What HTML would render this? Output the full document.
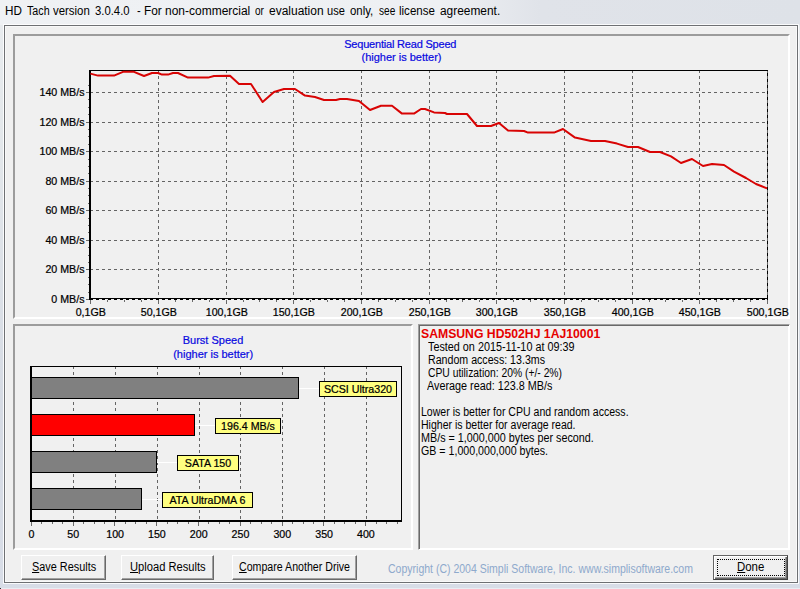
<!DOCTYPE html>
<html><head><meta charset="utf-8"><title>HD Tach</title>
<style>
html,body{margin:0;padding:0}
body{width:800px;height:589px;overflow:hidden;position:relative;font-family:"Liberation Sans",sans-serif;
 background:linear-gradient(180deg,#e9ecef 0px,#e4e8eb 120px,#d6dbe4 400px,#d8dde7 589px)}
.top{position:absolute;left:0;top:0;width:800px;height:25px;background:linear-gradient(90deg,#eff1f4 0,#eef0f3 440px,#e0e3e9 540px,#dee2e8 800px)}
.title{position:absolute;left:0;top:4px;font-size:12px;line-height:15px;color:#000;white-space:nowrap}
.title span{position:absolute;top:0;transform-origin:0 0;display:block}
.win{position:absolute;left:4px;top:25px;width:792px;height:556px;border:1px solid #6e7073;background:#f0f0f0;box-shadow:0 0 0 1px rgba(255,255,255,.85), inset 0 0 0 1px #f9f9f9}
.sunk{position:absolute;box-sizing:border-box;border:2px solid;border-color:#9c9c9c #fff #fff #9c9c9c}
.btn{position:absolute;box-sizing:border-box;height:25px;top:555px;border:1px solid;border-color:#fff #696969 #696969 #fff;box-shadow:inset -1px -1px 0 #a0a0a0;background:#f0f0f0;font-size:12px;line-height:15px;color:#000;white-space:nowrap}
svg{position:absolute;left:0;top:0}
.ax{font-family:"Liberation Sans",sans-serif;font-size:10.67px;fill:#000;stroke:#000;stroke-width:.22px}
.ti{font-family:"Liberation Sans",sans-serif;font-size:11px;fill:#0808e0;stroke:#0808e0;stroke-width:.2px}
.ms{position:absolute;font-size:12.5px;line-height:15px;white-space:nowrap;transform-origin:0 0;color:#000}
.ms.hd{font-weight:bold;color:#e60000;font-size:12px;line-height:13px}
.ms.cp{color:#8ea9cc;font-size:12px;line-height:13px}
.ms u{text-decoration:underline;text-underline-offset:1px;text-decoration-thickness:1px}
</style></head><body>
<div class="top"></div>
<div style="position:absolute;left:0;top:588px;width:800px;height:1px;background:#e9edf3"></div>
<div style="position:absolute;left:0;top:588px;width:1px;height:1px;background:#2a2c30"></div>
<div class="title"><span style="left:5.33px;transform:scaleX(0.975)">HD</span> <span style="left:26.6px;transform:scaleX(0.892)">Tach</span> <span style="left:53.1px;transform:scaleX(0.951)">version</span> <span style="left:94.66px;transform:scaleX(0.943)">3.0.4.0</span> <span style="left:136.9px;transform:scaleX(0.925)">-</span> <span style="left:144.41px;transform:scaleX(0.988)">For</span> <span style="left:165.1px;transform:scaleX(0.999)">non-commercial</span> <span style="left:255.4px;transform:scaleX(0.836)">or</span> <span style="left:269.4px;transform:scaleX(0.998)">evaluation</span> <span style="left:327.48px;transform:scaleX(0.922)">use</span> <span style="left:350.3px;transform:scaleX(0.952)">only,</span> <span style="left:379px;transform:scaleX(0.842)">see</span> <span style="left:399.24px;transform:scaleX(0.961)">license</span> <span style="left:439.5px;transform:scaleX(0.992)">agreement.</span></div>
<div class="win"></div>
<div class="sunk" style="left:13px;top:34px;width:777px;height:285px"></div>
<div class="sunk" style="left:13px;top:324px;width:400px;height:226px"></div>
<div class="sunk" style="left:418px;top:324px;width:372px;height:226px;border-width:1px;border-color:#a0a0a0 #fff #fff #a0a0a0;box-shadow:inset 1px 1px 0 #696969,inset -1px -1px 0 #fff"></div>
<svg width="800" height="589" viewBox="0 0 800 589" shape-rendering="crispEdges">
<line x1="158.5" y1="70" x2="158.5" y2="298" stroke="#646464" stroke-dasharray="3 3"/>
<line x1="226.5" y1="70" x2="226.5" y2="298" stroke="#646464" stroke-dasharray="3 3"/>
<line x1="293.5" y1="70" x2="293.5" y2="298" stroke="#646464" stroke-dasharray="3 3"/>
<line x1="361.5" y1="70" x2="361.5" y2="298" stroke="#646464" stroke-dasharray="3 3"/>
<line x1="429.5" y1="70" x2="429.5" y2="298" stroke="#646464" stroke-dasharray="3 3"/>
<line x1="496.5" y1="70" x2="496.5" y2="298" stroke="#646464" stroke-dasharray="3 3"/>
<line x1="564.5" y1="70" x2="564.5" y2="298" stroke="#646464" stroke-dasharray="3 3"/>
<line x1="632.5" y1="70" x2="632.5" y2="298" stroke="#646464" stroke-dasharray="3 3"/>
<line x1="699.5" y1="70" x2="699.5" y2="298" stroke="#646464" stroke-dasharray="3 3"/>
<line x1="90" y1="269.5" x2="767" y2="269.5" stroke="#646464" stroke-dasharray="3 3"/>
<line x1="90" y1="240.5" x2="767" y2="240.5" stroke="#646464" stroke-dasharray="3 3"/>
<line x1="90" y1="210.5" x2="767" y2="210.5" stroke="#646464" stroke-dasharray="3 3"/>
<line x1="90" y1="181.5" x2="767" y2="181.5" stroke="#646464" stroke-dasharray="3 3"/>
<line x1="90" y1="151.5" x2="767" y2="151.5" stroke="#646464" stroke-dasharray="3 3"/>
<line x1="90" y1="122.5" x2="767" y2="122.5" stroke="#646464" stroke-dasharray="3 3"/>
<line x1="90" y1="92.5" x2="767" y2="92.5" stroke="#646464" stroke-dasharray="3 3"/>
<rect x="86" y="299" width="3" height="1" fill="#6a6a6a"/>
<rect x="88" y="292" width="1" height="1" fill="#6a6a6a"/>
<rect x="88" y="284" width="1" height="1" fill="#6a6a6a"/>
<rect x="88" y="277" width="1" height="1" fill="#6a6a6a"/>
<rect x="86" y="269" width="3" height="1" fill="#6a6a6a"/>
<rect x="88" y="262" width="1" height="1" fill="#6a6a6a"/>
<rect x="88" y="255" width="1" height="1" fill="#6a6a6a"/>
<rect x="88" y="247" width="1" height="1" fill="#6a6a6a"/>
<rect x="86" y="240" width="3" height="1" fill="#6a6a6a"/>
<rect x="88" y="232" width="1" height="1" fill="#6a6a6a"/>
<rect x="88" y="225" width="1" height="1" fill="#6a6a6a"/>
<rect x="88" y="218" width="1" height="1" fill="#6a6a6a"/>
<rect x="86" y="210" width="3" height="1" fill="#6a6a6a"/>
<rect x="88" y="203" width="1" height="1" fill="#6a6a6a"/>
<rect x="88" y="195" width="1" height="1" fill="#6a6a6a"/>
<rect x="88" y="188" width="1" height="1" fill="#6a6a6a"/>
<rect x="86" y="181" width="3" height="1" fill="#6a6a6a"/>
<rect x="88" y="173" width="1" height="1" fill="#6a6a6a"/>
<rect x="88" y="166" width="1" height="1" fill="#6a6a6a"/>
<rect x="88" y="159" width="1" height="1" fill="#6a6a6a"/>
<rect x="86" y="151" width="3" height="1" fill="#6a6a6a"/>
<rect x="88" y="144" width="1" height="1" fill="#6a6a6a"/>
<rect x="88" y="136" width="1" height="1" fill="#6a6a6a"/>
<rect x="88" y="129" width="1" height="1" fill="#6a6a6a"/>
<rect x="86" y="122" width="3" height="1" fill="#6a6a6a"/>
<rect x="88" y="114" width="1" height="1" fill="#6a6a6a"/>
<rect x="88" y="107" width="1" height="1" fill="#6a6a6a"/>
<rect x="88" y="99" width="1" height="1" fill="#6a6a6a"/>
<rect x="86" y="92" width="3" height="1" fill="#6a6a6a"/>
<rect x="88" y="85" width="1" height="1" fill="#6a6a6a"/>
<rect x="90" y="300" width="1" height="4" fill="#6a6a6a"/>
<rect x="107" y="300" width="1" height="2" fill="#6a6a6a"/>
<rect x="124" y="300" width="1" height="2" fill="#6a6a6a"/>
<rect x="141" y="300" width="1" height="2" fill="#6a6a6a"/>
<rect x="158" y="300" width="1" height="4" fill="#6a6a6a"/>
<rect x="175" y="300" width="1" height="2" fill="#6a6a6a"/>
<rect x="192" y="300" width="1" height="2" fill="#6a6a6a"/>
<rect x="209" y="300" width="1" height="2" fill="#6a6a6a"/>
<rect x="226" y="300" width="1" height="4" fill="#6a6a6a"/>
<rect x="243" y="300" width="1" height="2" fill="#6a6a6a"/>
<rect x="259" y="300" width="1" height="2" fill="#6a6a6a"/>
<rect x="276" y="300" width="1" height="2" fill="#6a6a6a"/>
<rect x="293" y="300" width="1" height="4" fill="#6a6a6a"/>
<rect x="310" y="300" width="1" height="2" fill="#6a6a6a"/>
<rect x="327" y="300" width="1" height="2" fill="#6a6a6a"/>
<rect x="344" y="300" width="1" height="2" fill="#6a6a6a"/>
<rect x="361" y="300" width="1" height="4" fill="#6a6a6a"/>
<rect x="378" y="300" width="1" height="2" fill="#6a6a6a"/>
<rect x="395" y="300" width="1" height="2" fill="#6a6a6a"/>
<rect x="412" y="300" width="1" height="2" fill="#6a6a6a"/>
<rect x="429" y="300" width="1" height="4" fill="#6a6a6a"/>
<rect x="446" y="300" width="1" height="2" fill="#6a6a6a"/>
<rect x="462" y="300" width="1" height="2" fill="#6a6a6a"/>
<rect x="479" y="300" width="1" height="2" fill="#6a6a6a"/>
<rect x="496" y="300" width="1" height="4" fill="#6a6a6a"/>
<rect x="513" y="300" width="1" height="2" fill="#6a6a6a"/>
<rect x="530" y="300" width="1" height="2" fill="#6a6a6a"/>
<rect x="547" y="300" width="1" height="2" fill="#6a6a6a"/>
<rect x="564" y="300" width="1" height="4" fill="#6a6a6a"/>
<rect x="581" y="300" width="1" height="2" fill="#6a6a6a"/>
<rect x="598" y="300" width="1" height="2" fill="#6a6a6a"/>
<rect x="615" y="300" width="1" height="2" fill="#6a6a6a"/>
<rect x="632" y="300" width="1" height="4" fill="#6a6a6a"/>
<rect x="649" y="300" width="1" height="2" fill="#6a6a6a"/>
<rect x="665" y="300" width="1" height="2" fill="#6a6a6a"/>
<rect x="682" y="300" width="1" height="2" fill="#6a6a6a"/>
<rect x="699" y="300" width="1" height="4" fill="#6a6a6a"/>
<rect x="716" y="300" width="1" height="2" fill="#6a6a6a"/>
<rect x="733" y="300" width="1" height="2" fill="#6a6a6a"/>
<rect x="750" y="300" width="1" height="2" fill="#6a6a6a"/>
<rect x="767" y="300" width="1" height="4" fill="#6a6a6a"/>
<rect x="767" y="70" width="1" height="230" fill="#000"/>
<line x1="767.5" y1="70" x2="767.5" y2="298" stroke="#646464" stroke-dasharray="3 3"/>
<rect x="89" y="70" width="2" height="230" fill="#000"/>
<rect x="89" y="70" width="679" height="1" fill="#000"/>
<rect x="89" y="298" width="679" height="1" fill="#000"/>
<line x1="90" y1="299.5" x2="767" y2="299.5" stroke="#000" stroke-dasharray="3 3"/>
<polyline fill="none" stroke="#d80404" stroke-width="2" stroke-linejoin="round" shape-rendering="auto" points="90.4,73.6 98,75.6 114,75.6 123,71.8 134,71.8 144,76 152,73 158,73 162,74.6 168,74.6 173,73 178,73 188,77.6 208,77.6 214,76 230,75.8 239,84 251,84 262.6,102 274,92 284,89 295,89 305,95.6 315,97 324,100 336,100 340,99 347,99 359,101 370,110 381,105.8 392,105.8 402,113.6 414,113.6 421,109 425,109 434,112.4 445,113 447,114 467,114 477,126 491,126 499,123 508,130.6 524,131 528,132.6 554,132.6 563,129 575,137.6 591,141 605,141 617,143.6 628,147 638,147 650,152 660,152 671,156.4 681,163 692,159 703,166 712,164 724,165 734,171.6 746,178 756,184 767,188.4"/>
<text x="84.5" y="303" text-anchor="end" class="ax">0 MB/s</text>
<text x="84.5" y="273" text-anchor="end" class="ax">20 MB/s</text>
<text x="84.5" y="244" text-anchor="end" class="ax">40 MB/s</text>
<text x="84.5" y="214" text-anchor="end" class="ax">60 MB/s</text>
<text x="84.5" y="185" text-anchor="end" class="ax">80 MB/s</text>
<text x="84.5" y="155" text-anchor="end" class="ax">100 MB/s</text>
<text x="84.5" y="126" text-anchor="end" class="ax">120 MB/s</text>
<text x="84.5" y="96" text-anchor="end" class="ax">140 MB/s</text>
<text x="90.8" y="316" text-anchor="middle" class="ax">0,1GB</text>
<text x="158.8" y="316" text-anchor="middle" class="ax">50,1GB</text>
<text x="226.8" y="316" text-anchor="middle" class="ax">100,1GB</text>
<text x="293.8" y="316" text-anchor="middle" class="ax">150,1GB</text>
<text x="361.8" y="316" text-anchor="middle" class="ax">200,1GB</text>
<text x="429.8" y="316" text-anchor="middle" class="ax">250,1GB</text>
<text x="496.8" y="316" text-anchor="middle" class="ax">300,1GB</text>
<text x="564.8" y="316" text-anchor="middle" class="ax">350,1GB</text>
<text x="632.8" y="316" text-anchor="middle" class="ax">400,1GB</text>
<text x="699.8" y="316" text-anchor="middle" class="ax">450,1GB</text>
<text x="767.8" y="316" text-anchor="middle" class="ax">500,1GB</text>
<text x="400.3" y="48" text-anchor="middle" class="ti" textLength="112.3">Sequential Read Speed</text>
<text x="401.5" y="60.8" text-anchor="middle" class="ti" textLength="80">(higher is better)</text>
<line x1="73.5" y1="366" x2="73.5" y2="520" stroke="#646464" stroke-dasharray="3 3"/>
<line x1="115.5" y1="366" x2="115.5" y2="520" stroke="#646464" stroke-dasharray="3 3"/>
<line x1="157.5" y1="366" x2="157.5" y2="520" stroke="#646464" stroke-dasharray="3 3"/>
<line x1="199.5" y1="366" x2="199.5" y2="520" stroke="#646464" stroke-dasharray="3 3"/>
<line x1="240.5" y1="366" x2="240.5" y2="520" stroke="#646464" stroke-dasharray="3 3"/>
<line x1="282.5" y1="366" x2="282.5" y2="520" stroke="#646464" stroke-dasharray="3 3"/>
<line x1="324.5" y1="366" x2="324.5" y2="520" stroke="#646464" stroke-dasharray="3 3"/>
<line x1="366.5" y1="366" x2="366.5" y2="520" stroke="#646464" stroke-dasharray="3 3"/>
<rect x="31" y="522" width="1" height="4" fill="#6a6a6a"/>
<rect x="41" y="522" width="1" height="2" fill="#6a6a6a"/>
<rect x="52" y="522" width="1" height="2" fill="#6a6a6a"/>
<rect x="62" y="522" width="1" height="2" fill="#6a6a6a"/>
<rect x="73" y="522" width="1" height="4" fill="#6a6a6a"/>
<rect x="83" y="522" width="1" height="2" fill="#6a6a6a"/>
<rect x="94" y="522" width="1" height="2" fill="#6a6a6a"/>
<rect x="104" y="522" width="1" height="2" fill="#6a6a6a"/>
<rect x="114" y="522" width="1" height="4" fill="#6a6a6a"/>
<rect x="125" y="522" width="1" height="2" fill="#6a6a6a"/>
<rect x="135" y="522" width="1" height="2" fill="#6a6a6a"/>
<rect x="146" y="522" width="1" height="2" fill="#6a6a6a"/>
<rect x="156" y="522" width="1" height="4" fill="#6a6a6a"/>
<rect x="167" y="522" width="1" height="2" fill="#6a6a6a"/>
<rect x="177" y="522" width="1" height="2" fill="#6a6a6a"/>
<rect x="188" y="522" width="1" height="2" fill="#6a6a6a"/>
<rect x="198" y="522" width="1" height="4" fill="#6a6a6a"/>
<rect x="208" y="522" width="1" height="2" fill="#6a6a6a"/>
<rect x="219" y="522" width="1" height="2" fill="#6a6a6a"/>
<rect x="229" y="522" width="1" height="2" fill="#6a6a6a"/>
<rect x="240" y="522" width="1" height="4" fill="#6a6a6a"/>
<rect x="250" y="522" width="1" height="2" fill="#6a6a6a"/>
<rect x="261" y="522" width="1" height="2" fill="#6a6a6a"/>
<rect x="271" y="522" width="1" height="2" fill="#6a6a6a"/>
<rect x="282" y="522" width="1" height="4" fill="#6a6a6a"/>
<rect x="292" y="522" width="1" height="2" fill="#6a6a6a"/>
<rect x="303" y="522" width="1" height="2" fill="#6a6a6a"/>
<rect x="313" y="522" width="1" height="2" fill="#6a6a6a"/>
<rect x="323" y="522" width="1" height="4" fill="#6a6a6a"/>
<rect x="334" y="522" width="1" height="2" fill="#6a6a6a"/>
<rect x="344" y="522" width="1" height="2" fill="#6a6a6a"/>
<rect x="355" y="522" width="1" height="2" fill="#6a6a6a"/>
<rect x="365" y="522" width="1" height="4" fill="#6a6a6a"/>
<rect x="376" y="522" width="1" height="2" fill="#6a6a6a"/>
<rect x="386" y="522" width="1" height="2" fill="#6a6a6a"/>
<rect x="397" y="522" width="1" height="2" fill="#6a6a6a"/>
<rect x="298" y="388" width="21" height="1" fill="#fff"/>
<rect x="31.5" y="377.5" width="267" height="21" fill="#808080" stroke="#000"/>
<rect x="319.5" y="381.5" width="77" height="15" fill="#ffff80" stroke="#000"/>
<text x="358.0" y="393" text-anchor="middle" class="ax">SCSI Ultra320</text>
<rect x="194" y="425" width="21" height="1" fill="#fff"/>
<rect x="31.5" y="414.5" width="163" height="21" fill="#ff0000" stroke="#000"/>
<rect x="215.5" y="418.5" width="65" height="15" fill="#ffff80" stroke="#000"/>
<text x="248.0" y="430" text-anchor="middle" class="ax">196.4 MB/s</text>
<rect x="156" y="462" width="21" height="1" fill="#fff"/>
<rect x="31.5" y="451.5" width="125" height="21" fill="#808080" stroke="#000"/>
<rect x="177.5" y="455.5" width="61" height="15" fill="#ffff80" stroke="#000"/>
<text x="208.0" y="467" text-anchor="middle" class="ax">SATA 150</text>
<rect x="141" y="499" width="21" height="1" fill="#fff"/>
<rect x="31.5" y="488.5" width="110" height="21" fill="#808080" stroke="#000"/>
<rect x="162.5" y="492.5" width="90" height="15" fill="#ffff80" stroke="#000"/>
<text x="207.5" y="504" text-anchor="middle" class="ax">ATA UltraDMA 6</text>
<rect x="30" y="366" width="372" height="1" fill="#000"/>
<rect x="401" y="366" width="1" height="156" fill="#000"/>
<rect x="30" y="366" width="2" height="156" fill="#000"/>
<rect x="30" y="520" width="372" height="2" fill="#000"/>
<text x="31.5" y="538" text-anchor="middle" class="ax">0</text>
<text x="73.3" y="538" text-anchor="middle" class="ax">50</text>
<text x="115.1" y="538" text-anchor="middle" class="ax">100</text>
<text x="156.9" y="538" text-anchor="middle" class="ax">150</text>
<text x="198.7" y="538" text-anchor="middle" class="ax">200</text>
<text x="240.5" y="538" text-anchor="middle" class="ax">250</text>
<text x="282.3" y="538" text-anchor="middle" class="ax">300</text>
<text x="324.1" y="538" text-anchor="middle" class="ax">350</text>
<text x="365.9" y="538" text-anchor="middle" class="ax">400</text>
<text x="213" y="344" text-anchor="middle" class="ti">Burst Speed</text>
<text x="213.2" y="357.8" text-anchor="middle" class="ti" textLength="80">(higher is better)</text>
</svg>
<div class="ms hd" style="left:421.1px;top:328px;transform:scaleX(1.018)">SAMSUNG HD502HJ 1AJ10001</div>
<div class="ms tx" style="left:428.1px;top:340px;transform:scaleX(0.865)">Tested on 2015-11-10 at 09:39</div>
<div class="ms tx" style="left:427.5px;top:353px;transform:scaleX(0.8504)">Random access: 13.3ms</div>
<div class="ms tx" style="left:427.8px;top:366px;transform:scaleX(0.826)">CPU utilization: 20% (+/- 2%)</div>
<div class="ms tx" style="left:427.2px;top:379px;transform:scaleX(0.8653)">Average read: 123.8 MB/s</div>
<div class="ms tx" style="left:421.4px;top:405px;transform:scaleX(0.844)">Lower is better for CPU and random access.</div>
<div class="ms tx" style="left:421.4px;top:418px;transform:scaleX(0.8425)">Higher is better for average read.</div>
<div class="ms tx" style="left:421.4px;top:431px;transform:scaleX(0.862)">MB/s = 1,000,000 bytes per second.</div>
<div class="ms tx" style="left:421.4px;top:444px;transform:scaleX(0.8514)">GB = 1,000,000,000 bytes.</div>
<div class="ms cp" style="left:387.5px;top:563px;transform:scaleX(0.876)">Copyright (C) 2004 Simpli Software, Inc. www.simplisoftware.com</div>
<div class="btn" style="left:21px;width:85px"></div>
<div class="btn" style="left:121px;width:93px"></div>
<div class="btn" style="left:232px;width:125px"></div>
<div class="btn" style="left:713px;width:75px;border-color:#646464 #404040 #404040 #646464;box-shadow:inset 1px 1px 0 #fff, inset -1px -1px 0 #696969, inset -2px -2px 0 #a0a0a0"><i style="position:absolute;left:3px;top:3px;width:66px;height:15px;border:1px dotted #000"></i></div>
<div class="ms tx" style="left:32.1px;top:560px;transform:scaleX(0.871)"><u>S</u>ave Results</div>
<div class="ms tx" style="left:130.1px;top:560px;transform:scaleX(0.8923)"><u>U</u>pload Results</div>
<div class="ms tx" style="left:238.7px;top:560px;transform:scaleX(0.85)"><u>C</u>ompare Another Drive</div>
<div class="ms tx" style="left:737.3px;top:560px;transform:scaleX(0.9138)"><u>D</u>one</div>
</body></html>
